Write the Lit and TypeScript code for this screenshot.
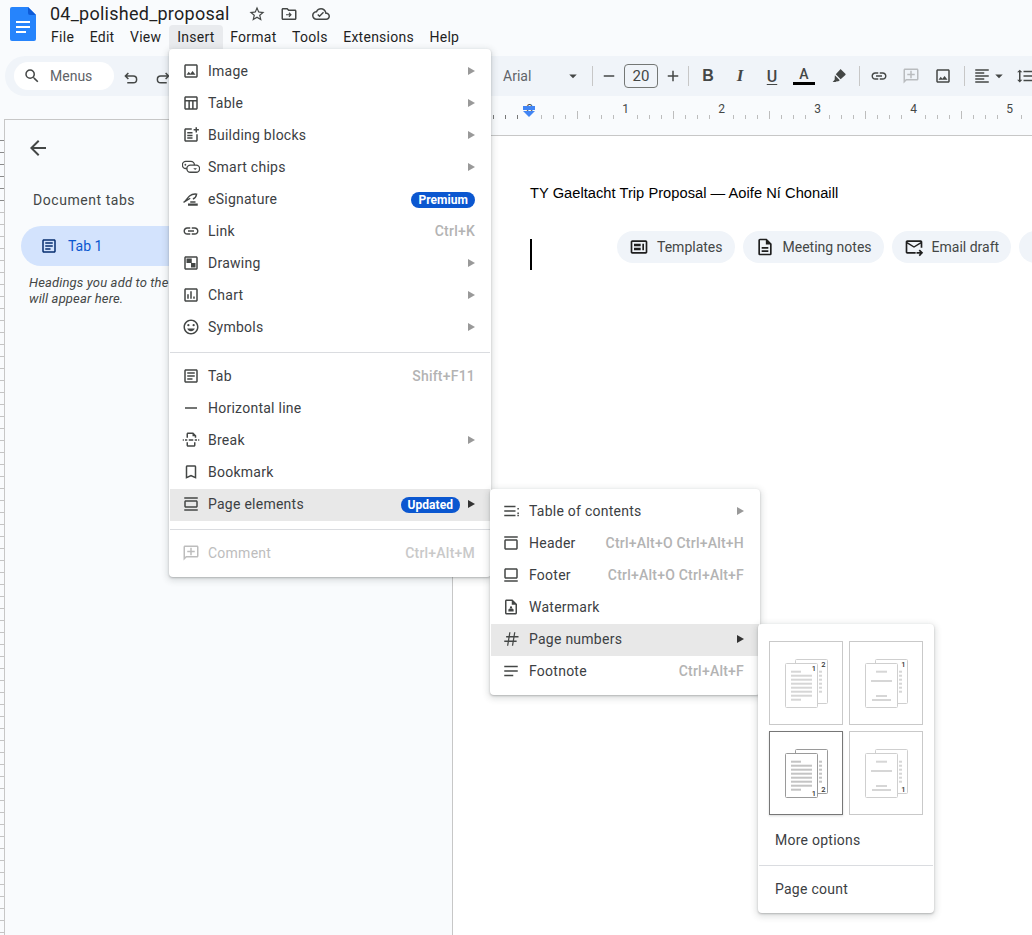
import { LitElement, html, css, svg } from "lit";
import { customElement } from "lit/decorators.js";

const FRAME = svg`<path d="M19 5v14H5V5h14m0-2H5c-1.1 0-2 .9-2 2v14c0 1.1.9 2 2 2h14c1.1 0 2-.9 2-2V5c0-1.1-.9-2-2-2z"/>`;
const ICONS: Record<string, unknown> = {
  image: svg`${FRAME}<path d="M14.14 11.86l-3 3.87L9 13.14 6 17h12l-3.86-5.14z"/>`,
  table: svg`<path d="M19 3H5c-1.1 0-2 .9-2 2v14c0 1.1.9 2 2 2h14c1.1 0 2-.9 2-2V5c0-1.1-.9-2-2-2zm0 2v3H5V5h14zM5 19v-9h3.5v9H5zm5.5 0v-9h3v9h-3zm5 0v-9H19v9h-3.5z"/>`,
  blocks: svg`<path d="M19 11v8H5V5h8V3H5c-1.1 0-2 .9-2 2v14c0 1.1.9 2 2 2h14c1.1 0 2-.9 2-2v-8h-2z"/><path d="M7 8h7v2H7zM7 11.5h7v2H7zM7 15h7v2H7zM18 1.5h2v2.5h2.5v2H20v2.5h-2V6h-2.5V4H18z"/>`,
  chips: svg`<g fill="none" stroke="currentColor" stroke-width="1.8"><rect x="0.5" y="4.5" width="16" height="9.5" rx="4.7"/><rect x="6.5" y="9.5" width="17" height="9.5" rx="4.7" fill="#fff"/></g><circle cx="4.5" cy="9" r="1.2"/><path d="M15 13.5h5l-2.5 2.5z"/>`,
  sign: svg`<path fill="none" stroke="currentColor" stroke-width="1.8" d="M2 16.5c3-1 5-6 8-8.5 2.5-2 6-3 9.5-2.5-.5 3-2 5.5-5 6.5M2 16.5l9-5.5"/><path d="M8 18h13v3H8zM11 15h7v2h-7z"/>`,
  link: svg`<path d="M3.9 12c0-1.71 1.39-3.1 3.1-3.1h4V7H7c-2.76 0-5 2.24-5 5s2.24 5 5 5h4v-1.9H7c-1.71 0-3.1-1.39-3.1-3.1zM8 13h8v-2H8v2zm9-6h-4v1.9h4c1.71 0 3.1 1.39 3.1 3.1s-1.39 3.1-3.1 3.1h-4V17h4c2.76 0 5-2.24 5-5s-2.24-5-5-5z"/>`,
  drawing: svg`${FRAME}<path d="M6 6h7v6H6zM12 12h6v6h-6z"/>`,
  chart: svg`${FRAME}<path d="M7 11h2v6H7zM11 7h2v10h-2zM15 14h2v3h-2z"/>`,
  smile: svg`<path d="M12 2C6.48 2 2 6.48 2 12s4.48 10 10 10 10-4.48 10-10S17.52 2 12 2zm0 18c-4.42 0-8-3.58-8-8s3.58-8 8-8 8 3.58 8 8-3.58 8-8 8z"/><circle cx="8.5" cy="9.5" r="1.5"/><circle cx="15.5" cy="9.5" r="1.5"/><path d="M12 17.5c2.33 0 4.31-1.46 5.11-3.5H6.89c.8 2.04 2.78 3.5 5.11 3.5z"/>`,
  tab: svg`${FRAME}<path d="M7 7h10v2H7zM7 11h10v2H7zM7 15h7v2H7z"/>`,
  hline: svg`<path d="M4 11h16v2H4z"/>`,
  brk: svg`<path d="M4 11h3v2H4zM9 11h6v2H9zM17 11h3v2h-3zM1 11h1.5v2H1zM21.5 11H23v2h-1.5zM6 9V4c0-1.1.9-2 2-2h7l4 4v3h-2V7h-3V4H8v5zM6 15h2v4h8v-4h2v4c0 1.1-.9 2-2 2H8c-1.1 0-2-.9-2-2z"/>`,
  bookmark: svg`<path d="M17 3H7c-1.1 0-2 .9-2 2v16l7-3 7 3V5c0-1.1-.9-2-2-2zm0 15l-5-2.18L7 18V5h10v13z"/>`,
  elements: svg`<path d="M3 3h18v2H3zM3 19h18v2H3z"/><path d="M5 7h14c1.1 0 2 .9 2 2v6c0 1.1-.9 2-2 2H5c-1.1 0-2-.9-2-2V9c0-1.1.9-2 2-2zm0 2v6h14V9z" fill-rule="evenodd"/>`,
  comment: svg`<path d="M20 2H4c-1.1 0-2 .9-2 2v18l4-4h14c1.1 0 2-.9 2-2V4c0-1.1-.9-2-2-2zm0 14H5.17L4 17.17V4h16v12z"/><path d="M11 5h2v4h4v2h-4v4h-2v-4H7V9h4z"/>`,
  toc: svg`<path d="M3 5h15v2H3zM3 11h15v2H3zM3 17h15v2H3zM20.5 8h2v2h-2zM20.5 14h2v2h-2zM20.5 17h2v2h-2z"/>`,
  header: svg`<path d="M3 3h18v2H3z"/><path d="M5 7h14c1.1 0 2 .9 2 2v10c0 1.1-.9 2-2 2H5c-1.1 0-2-.9-2-2V9c0-1.1.9-2 2-2zm0 2v10h14V9z" fill-rule="evenodd"/>`,
  footer: svg`<path d="M3 19h18v2H3z"/><path d="M5 3h14c1.1 0 2 .9 2 2v10c0 1.1-.9 2-2 2H5c-1.1 0-2-.9-2-2V5c0-1.1.9-2 2-2zm0 2v10h14V5z" fill-rule="evenodd"/>`,
  watermark: svg`<path d="M14 2H6c-1.1 0-2 .9-2 2v16c0 1.1.9 2 2 2h12c1.1 0 2-.9 2-2V8l-6-6zm4 18H6V4h7v5h5v11z"/><circle cx="12" cy="12.5" r="1.5"/><path d="M8.5 16c0-1.5 1.5-2 3.5-2s3.5.5 3.5 2v2h-7z"/>`,
  numbers: svg`<path fill="none" stroke="currentColor" stroke-width="1.7" d="M5.5 9H22M3 15h16.5M10.5 3L7.5 21M17 3l-3 18"/>`,
  footnote: svg`<path d="M3 5h18v2H3zM3 11h18v2H3zM3 17h12v2H3z"/>`,
  search: svg`<path d="M15.5 14h-.79l-.28-.27A6.47 6.47 0 0 0 16 9.5 6.5 6.5 0 1 0 9.5 16c1.61 0 3.09-.59 4.23-1.57l.27.28v.79l5 4.99L20.49 19l-4.99-5zm-6 0C7.01 14 5 11.99 5 9.5S7.01 5 9.5 5 14 7.01 14 9.5 11.99 14 9.5 14z"/>`,
  undo: svg`<path fill="none" stroke="currentColor" stroke-width="2" d="M8.5 8L4.5 12l4 4M5 12h10a4.5 4.5 0 0 1 0 9H7"/>`,
  redo: svg`<path fill="none" stroke="currentColor" stroke-width="2" d="M15.5 8l4 4-4 4M19 12H9a4.5 4.5 0 0 0 0 9h8"/>`,
  star: svg`<path d="M22 9.24l-7.19-.62L12 2 9.19 8.63 2 9.24l5.46 4.73L5.82 21 12 17.27 18.18 21l-1.63-7.03L22 9.24zM12 15.4l-3.76 2.27 1-4.28-3.32-2.88 4.38-.38L12 6.1l1.71 4.04 4.38.38-3.32 2.88 1 4.28L12 15.4z"/>`,
  folder: svg`<path d="M20 6h-8l-2-2H4c-1.1 0-2 .9-2 2v12c0 1.1.9 2 2 2h16c1.1 0 2-.9 2-2V8c0-1.1-.9-2-2-2zm0 12H4V6h5.17l2 2H20v10z"/><path d="M12.5 9.8l3.2 3.2-3.2 3.2-1.1-1.1 1.3-1.3H8v-1.6h4.7l-1.3-1.3z"/>`,
  cloud: svg`<path d="M19.35 10.04C18.67 6.59 15.64 4 12 4 9.11 4 6.6 5.64 5.35 8.04 2.34 8.36 0 10.91 0 14c0 3.31 2.69 6 6 6h13c2.76 0 5-2.24 5-5 0-2.64-2.05-4.78-4.65-4.96zM19 18H6c-2.21 0-4-1.79-4-4 0-2.05 1.53-3.76 3.56-3.97l1.07-.11.5-.95C8.08 7.14 9.94 6 12 6c2.62 0 4.88 1.86 5.39 4.43l.3 1.5 1.53.11c1.56.1 2.78 1.41 2.78 2.96 0 1.65-1.35 3-3 3z"/><path d="M10 16.2l-3-3 1.3-1.3 1.7 1.7 4.7-4.7 1.3 1.3z"/>`,
  back: svg`<path d="M20 11H7.83l5.59-5.59L12 4l-8 8 8 8 1.41-1.41L7.83 13H20v-2z"/>`,
  caret: svg`<path d="M7 10l5 5 5-5z"/>`,
  minus: svg`<path d="M5 11h14v2H5z"/>`,
  plus: svg`<path d="M19 13h-6v6h-2v-6H5v-2h6V5h2v6h6v2z"/>`,
  marker: svg`<path d="M15 3.5l5.5 5.5c.5.5.5 1.2 0 1.7l-6.3 5.6-6.5-6.5 5.6-6.3c.5-.5 1.2-.5 1.7 0zM6.500 11l6.5 6.5-1.8 1.5-3 .2-.7.7H3.5l2.7-2.8.1-3.200z"/>`,
  align: svg`<path d="M3 3h18v2H3zM3 7h12v2H3zM3 11h18v2H3zM3 15h12v2H3zM3 19h18v2H3z"/>`,
  spacing: svg`<path d="M6 7h2.5L5 3.5 1.5 7H4v10H1.5L5 20.5 8.5 17H6V7zm4-2v2h12V5H10zm0 14h12v-2H10v2zm0-6h12v-2H10v2z"/>`,
  templates: svg`<path d="M20 4H4c-1.1 0-2 .9-2 2v12c0 1.1.9 2 2 2h16c1.1 0 2-.9 2-2V6c0-1.1-.9-2-2-2zm0 14H4V6h16v12z"/><path d="M6 8h8v3H6zM6 13h8v3H6zM16 8h2v8h-2z"/>`,
  note: svg`<path d="M14 2H6c-1.1 0-2 .9-2 2v16c0 1.1.9 2 2 2h12c1.1 0 2-.9 2-2V8l-6-6zm4 18H6V4h7v5h5v11z"/><path d="M8 12h8v2H8zM8 16h8v2H8z"/>`,
  mail: svg`<path d="M20 4H4c-1.1 0-2 .9-2 2v12c0 1.1.9 2 2 2h10v-2H4V8l8 5 8-5v5h2V6c0-1.1-.9-2-2-2zm-8 7L4 6h16l-8 5z"/><path d="M19 15l-1.4 1.4 1.6 1.6H15v2h4.2l-1.6 1.6L19 23l4-4z"/>`,
};

function icon(name: string) {
  return html`<svg class="icon" viewBox="0 0 24 24" fill="currentColor" aria-hidden="true">${ICONS[name]}</svg>`;
}

type Item = { icon: string; label: string; arrow?: boolean; key?: string; badge?: string; active?: boolean; off?: boolean; sep?: boolean };

const INSERT: Item[] = [
  { icon: "image", label: "Image", arrow: true },
  { icon: "table", label: "Table", arrow: true },
  { icon: "blocks", label: "Building blocks", arrow: true },
  { icon: "chips", label: "Smart chips", arrow: true },
  { icon: "sign", label: "eSignature", badge: "Premium" },
  { icon: "link", label: "Link", key: "Ctrl+K" },
  { icon: "drawing", label: "Drawing", arrow: true },
  { icon: "chart", label: "Chart", arrow: true },
  { icon: "smile", label: "Symbols", arrow: true },
  { icon: "", label: "", sep: true },
  { icon: "tab", label: "Tab", key: "Shift+F11" },
  { icon: "hline", label: "Horizontal line" },
  { icon: "brk", label: "Break", arrow: true },
  { icon: "bookmark", label: "Bookmark" },
  { icon: "elements", label: "Page elements", badge: "Updated", arrow: true, active: true },
  { icon: "", label: "", sep: true },
  { icon: "comment", label: "Comment", key: "Ctrl+Alt+M", off: true },
];

const ELEMENTS: Item[] = [
  { icon: "toc", label: "Table of contents", arrow: true },
  { icon: "header", label: "Header", key: "Ctrl+Alt+O Ctrl+Alt+H" },
  { icon: "footer", label: "Footer", key: "Ctrl+Alt+O Ctrl+Alt+F" },
  { icon: "watermark", label: "Watermark" },
  { icon: "numbers", label: "Page numbers", arrow: true, active: true },
  { icon: "footnote", label: "Footnote", key: "Ctrl+Alt+F" },
];

function tile(first: boolean, bottom: boolean, selected: boolean) {
  const line = selected ? "#c4c4c4" : "#d6d6d6";
  const page = selected ? "#9a9a9a" : "#cfcfcf";
  const bars = first
    ? [0, 1, 2, 3, 4, 5, 6, 7].map((i) =>
        svg`<rect x="22" y="${29.7 + i * 4}" width="${i === 0 || i === 7 ? 10 : 21}" height="2" fill="${line}"/>`)
    : [
        svg`<rect x="27" y="29.7" width="11" height="2" fill="${line}"/>`,
        svg`<rect x="22" y="39" width="21" height="2" fill="${line}"/>`,
        svg`<rect x="27" y="54" width="11" height="2" fill="${line}"/>`,
        svg`<rect x="23" y="58" width="19" height="2" fill="${line}"/>`,
      ];
  const dots = [0, 1, 2, 3, 4, 5].map((i) =>
    svg`<rect x="50" y="${29.7 + i * 4}" width="3" height="2" fill="${line}"/>`);
  return html`<div class="tile ${selected ? "selected" : ""}">
    <svg width="72" height="82" viewBox="1 1 72 82">
      <rect x="26.5" y="18.5" width="32" height="44" rx="1" fill="#fff" stroke="${page}"/>
      ${dots}
      <rect x="16.5" y="22.5" width="32" height="44" rx="1" fill="#fff" stroke="${page}"/>
      ${bars}
      <text x="54.5" y="${bottom ? 60.5 : 25.5}" class="pg">${first ? "2" : "1"}</text>
      ${first ? svg`<text x="45" y="${bottom ? 64.5 : 29.5}" class="pg">1</text>` : ""}
    </svg>
  </div>`;
}

const ticks: number[] = [];
for (let i = 0; i < 50; i++) ticks.push(i);

@customElement("app-root")
export class AppRoot extends LitElement {
  static styles = css`
    :host {
      display: block;
      position: relative;
      width: 1032px;
      height: 935px;
      overflow: hidden;
      background: #f9fbfd;
      font-family: Roboto, "Liberation Sans", sans-serif;
      font-size: 14px;
      color: #1f1f1f;
    }
    .icon { width: 18px; height: 18px; flex: none; display: block; }

    .top { height: 56px; display: flex; }
    .logo { margin: 7px 0 0 10px; width: 26px; height: 34px; flex: none; }
    .titles { margin-left: 7px; display: flex; flex-direction: column; }
    .title-row { display: flex; align-items: center; height: 22px; margin-left: 7px; margin-top: 3px; }
    .title { font-size: 18px; line-height: 22px; width: 198px; letter-spacing: 0.25px; flex: none; }
    .title-icons { display: flex; gap: 14px; color: #444746; }
    .bar { display: flex; height: 24px; margin-left: 0.5px; }
    .bar span { padding: 0 8px 0 7.6px; line-height: 24px; letter-spacing: 0.25px; flex: none; }
    .bar span.open { background: #e9ebee; border-radius: 4px 4px 0 0; padding: 0 8px; }

    .tools { height: 40px; margin-left: 5px; background: #f0f4f9; border-radius: 20px 0 0 20px; display: flex; align-items: center; color: #444746; }
    .search { margin-left: 9px; width: 100px; height: 28px; background: #fff; border-radius: 14px; display: flex; align-items: center; box-sizing: border-box; padding-left: 9px; gap: 9px; color: #444746; flex: none; }
    .search span { color: #5f6368; }
    .undo { margin-left: 8px; flex: none; }
    .redo { margin-left: 14px; flex: none; }
    .tool-right { margin-left: 331px; display: flex; align-items: center; height: 100%; flex: none; }
    .font { width: 61px; color: #5f6368; flex: none; }
    .caret { margin-right: 10px; flex: none; }
    .vsep { width: 1px; height: 20px; background: #c7c7c7; flex: none; }
    .num { width: 32px; height: 22px; border: 1px solid #747775; border-radius: 4px; display: flex; align-items: center; justify-content: center; font-size: 15px; flex: none; }
    .slot { width: 32px; display: flex; justify-content: center; flex: none; }
    .slot.dim { color: #b9bcbf; }
    .s-minus { width: 31px; }
    .s-plus { width: 30px; }
    .fmt { width: 32px; text-align: center; font-size: 16px; flex: none; }
    .b { font-weight: 700; font-family: "Liberation Sans", sans-serif; margin-left: 3px; }
    .i { font-style: italic; font-family: "Liberation Serif", serif; font-weight: 700; font-size: 17px; }
    .u { text-decoration: underline; text-underline-offset: 2px; font-weight: 500; }
    .colour { width: 32px; display: flex; flex-direction: column; align-items: center; font-weight: 500; line-height: 15px; flex: none; }
    .colour i { display: block; width: 22px; height: 3px; background: #000; }
    .s-mark { margin-left: 3px; }
    .sep-a { margin-left: 4px; }
    .s-link { margin-left: 3px; }
    .sep-b { margin-left: 5px; }
    .s-align { width: 24px; margin-left: 5px; }
    .s-caret { margin-left: -4px; flex: none; }
    .s-space { margin-left: 1px; }

    .work { display: flex; height: 839px; }
    .left { width: 452px; flex: none; display: flex; padding-top: 23px; box-sizing: border-box; }
    .vruler {
      width: 4px;
      flex: none;
      background:
        repeating-linear-gradient(#8a8a8a 0 1px, transparent 1px 12px) 0 21px / 100% 72px no-repeat,
        repeating-linear-gradient(#c4c4c4 0 1px, transparent 1px 12px) 0 93px / 100% 100% no-repeat;
    }
    .panel { flex: 1; border-top: 1px solid #c7c7c7; border-left: 1px solid #c7c7c7; overflow: hidden; padding: 16px 0 0 21px; }
    .panel .back { width: 24px; height: 24px; color: #444746; display: block; }
    .panel h2 { font-size: 14px; font-weight: 400; letter-spacing: 0.55px; color: #444746; margin: 30px 0 0 7px; line-height: 20px; }
    .pill { margin: 16px 0 0 -5px; width: 260px; height: 40px; background: #d3e3fd; border-radius: 20px; display: flex; align-items: center; padding-left: 19px; gap: 10px; color: #0b57d0; box-sizing: border-box; }
    .pill .icon { color: #062e6f; }
    .hint { font-style: italic; font-size: 13px; line-height: 16px; color: #444746; margin: 9px 0 0 3px; width: 215px; letter-spacing: 0.15px; }

    .right { flex: 1; display: flex; flex-direction: column; min-width: 0; }
    .ruler { height: 40px; flex: none; border-bottom: 1px solid #c7c7c7; box-sizing: border-box; }
    .ruler svg { display: block; }
    .ruler text { font: 12px Roboto, sans-serif; fill: #444746; text-anchor: middle; }
    .doc { flex: 1; background: #fff; border-left: 1px solid #c7c7c7; padding: 48px 0 0 77px; overflow: hidden; }
    .heading { font: 14.67px/18px "Liberation Sans", Arial, sans-serif; color: #000; letter-spacing: 0.03px; white-space: nowrap; }
    .row { display: flex; margin-top: 29px; }
    .cursor { width: 2px; height: 31px; background: #000; margin-top: 8px; flex: none; }
    .chips { display: flex; gap: 8px; margin-left: 85px; flex: none; }
    .chip { height: 32px; background: #f0f4f9; border-radius: 16px; display: flex; align-items: center; padding: 0 12px; gap: 8px; color: #444746; flex: none; box-sizing: border-box; }
    .chip .icon { color: #1f1f1f; width: 20px; height: 20px; }
    .chip.empty { width: 60px; }

    .menu { position: absolute; background: #fff; border-radius: 4px; box-shadow: 0 1px 2px rgba(60, 64, 67, 0.3), 0 2px 6px 2px rgba(60, 64, 67, 0.15); box-sizing: border-box; }
    .insert { left: 169px; top: 49px; width: 322px; padding: 7px 1px; }
    .elements { left: 490px; top: 489px; width: 270px; padding: 7px 1px; }
    .numbers { left: 758px; top: 624px; width: 176px; height: 289px; padding: 17px 1px 0; }
    .item { height: 32px; display: flex; align-items: center; box-sizing: border-box; padding: 0 15px 2px 12px; color: #3c4043; letter-spacing: 0.25px; }
    .insert .item { padding-left: 13px; }
    .item .icon { margin-right: 8px; color: #444746; margin-left: -1px; }
    .item .lab { flex: 1; }
    .elements .lab { margin-left: 1px; }
    .item.on { background: #e8e8e8; }
    .item.off, .item.off .icon { color: #bdbdbd; }
    .key { color: #b3b3b3; font-weight: 500; letter-spacing: 0.22px; }
    .item.off .key { color: #c9c9c9; }
    .badge { background: #0b57d0; color: #fff; font-size: 12px; font-weight: 700; line-height: 16px; padding: 0 7px; border-radius: 8px; letter-spacing: 0.05px; margin-top: 1px; }
    .tri { width: 0; height: 0; border-left: 7px solid #999; border-top: 4px solid transparent; border-bottom: 4px solid transparent; margin-left: 8px; }
    .on .tri { border-left-color: #333; }
    .hr { height: 1px; background: #dadce0; margin: 8px 0; }
    .tiles { display: grid; grid-template-columns: 74px 74px; gap: 6px; padding-left: 10px; margin-bottom: 9px; }
    .tile { width: 74px; height: 84px; border: 1px solid #c9c9c9; box-sizing: border-box; }
    .tile.selected { border-color: #777; box-shadow: 0 1px 2px rgba(60, 64, 67, 0.2); }
    .tile svg { display: block; }
    .pg { font: 500 7.5px Roboto, sans-serif; fill: #333; text-anchor: middle; }
    .plain { height: 32px; display: flex; align-items: center; padding-left: 16px; color: #3c4043; letter-spacing: 0.25px; }
    .numbers .hr { margin: 9px 0 7px; }
  `;

  private renderItem(it: Item) {
    if (it.sep) return html`<div class="hr"></div>`;
    return html`<div class="item ${it.active ? "on" : ""} ${it.off ? "off" : ""}">
      ${icon(it.icon)}
      <span class="lab">${it.label}</span>
      ${it.badge ? html`<span class="badge">${it.badge}</span>` : ""}
      ${it.key ? html`<span class="key">${it.key}</span>` : ""}
      ${it.arrow ? html`<span class="tri"></span>` : ""}
    </div>`;
  }

  render() {
    return html`
      <div class="top">
        <svg class="logo" viewBox="0 0 26 34" aria-label="Docs">
          <path d="M2 0h16l8 8v24a2 2 0 0 1-2 2H2a2 2 0 0 1-2-2V2a2 2 0 0 1 2-2z" fill="#2684fc"/>
          <path d="M18 0l8 8h-6a2 2 0 0 1-2-2z" fill="#0d5bd8"/>
          <path d="M6 14h14v2H6zM6 19h14v2H6zM6 24h10v2H6z" fill="#fff"/>
        </svg>
        <div class="titles">
          <div class="title-row">
            <span class="title">04_polished_proposal</span>
            <div class="title-icons">${icon("star")}${icon("folder")}${icon("cloud")}</div>
          </div>
          <div class="bar">
            <span>File</span><span>Edit</span><span>View</span><span class="open">Insert</span><span>Format</span><span>Tools</span><span>Extensions</span><span>Help</span>
          </div>
        </div>
      </div>

      <div class="tools">
        <div class="search">${icon("search")}<span>Menus</span></div>
        <div class="undo">${icon("undo")}</div>
        <div class="redo">${icon("redo")}</div>
        <div class="tool-right">
          <span class="font">Arial</span>
          <span class="caret">${icon("caret")}</span>
          <span class="vsep"></span>
          <span class="slot s-minus">${icon("minus")}</span>
          <span class="num">20</span>
          <span class="slot s-plus">${icon("plus")}</span>
          <span class="vsep"></span>
          <span class="fmt b">B</span>
          <span class="fmt i">I</span>
          <span class="fmt u">U</span>
          <span class="colour">A<i></i></span>
          <span class="slot s-mark">${icon("marker")}</span>
          <span class="vsep sep-a"></span>
          <span class="slot s-link">${icon("link")}</span>
          <span class="slot dim">${icon("comment")}</span>
          <span class="slot">${icon("image")}</span>
          <span class="vsep sep-b"></span>
          <span class="slot s-align">${icon("align")}</span>
          <span class="s-caret">${icon("caret")}</span>
          <span class="slot s-space">${icon("spacing")}</span>
        </div>
      </div>

      <div class="work">
        <aside class="left">
          <div class="vruler"></div>
          <div class="panel">
            <svg class="back" viewBox="0 0 24 24" fill="currentColor">${ICONS.back}</svg>
            <h2>Document tabs</h2>
            <div class="pill">${icon("tab")}<span>Tab 1</span></div>
            <p class="hint">Headings you add to the document will appear here.</p>
          </div>
        </aside>
        <section class="right">
          <div class="ruler">
            <svg width="580" height="24" viewBox="452 96 580 24">
              ${ticks.map((i) => {
                const x = 529.5 - 48 + i * 12;
                const major = i % 4 === 0;
                const stroke = x < 529 ? "#777" : "#bdbdbd";
                const tick = svg`<line x1="${x}" x2="${x}" y1="${major ? 111 : 115}" y2="119" stroke="${stroke}"/>`;
                if (i % 8 === 4 && x > 529) {
                  return svg`<text x="${x}" y="113">${(x - 529.5) / 96}</text>`;
                }
                return tick;
              })}
              <rect x="523" y="106" width="12" height="4" fill="#4285f4"/>
              <path d="M523 111h12l-6 6z" fill="#4285f4"/>
            </svg>
          </div>
          <div class="doc">
            <div class="heading">TY Gaeltacht Trip Proposal — Aoife Ní Chonaill</div>
            <div class="row">
              <div class="cursor"></div>
              <div class="chips">
                <div class="chip">${icon("templates")}<span>Templates</span></div>
                <div class="chip">${icon("note")}<span>Meeting notes</span></div>
                <div class="chip">${icon("mail")}<span>Email draft</span></div>
                <div class="chip empty"></div>
              </div>
            </div>
          </div>
        </section>
      </div>

      <div class="menu insert">${INSERT.map((i) => this.renderItem(i))}</div>
      <div class="menu elements">${ELEMENTS.map((i) => this.renderItem(i))}</div>
      <div class="menu numbers">
        <div class="tiles">
          ${tile(true, false, false)}${tile(false, false, false)}
          ${tile(true, true, true)}${tile(false, true, false)}
        </div>
        <div class="plain">More options</div>
        <div class="hr"></div>
        <div class="plain">Page count</div>
      </div>
    `;
  }
}
